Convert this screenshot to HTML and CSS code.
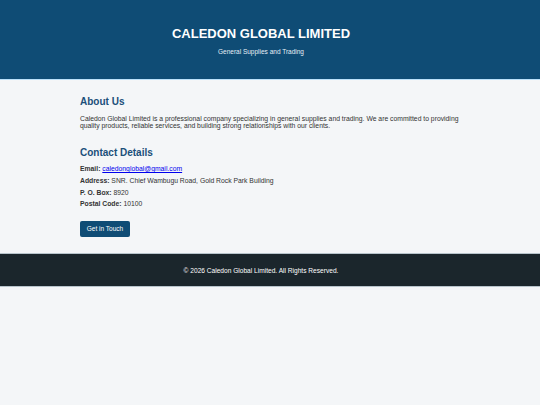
FILE: index.html
```html
<!DOCTYPE html>
<html lang="en">
<head>
<meta charset="utf-8">
<title>Caledon Global Limited</title>
<link rel="stylesheet" href="styles.css">
</head>
<body>
<header class="site-header">
  <h1 class="site-title">CALEDON GLOBAL LIMITED</h1>
  <p class="site-tagline">General Supplies and Trading</p>
</header>
<main class="container">
  <section class="section">
    <h2 class="section-title">About Us</h2>
    <p class="about-text">Caledon Global Limited is a professional company specializing in general supplies and trading. We are committed to providing quality products, reliable services, and building strong relationships with our clients.</p>
  </section>
  <section class="section">
    <h2 class="section-title contact-title">Contact Details</h2>
    <p class="contact-line"><strong>Email:</strong> <a href="mailto:caledonglobal@gmail.com">caledonglobal@gmail.com</a></p>
    <p class="contact-line"><strong>Address:</strong> SNR. Chief Wambugu Road, Gold Rock Park Building</p>
    <p class="contact-line"><strong>P. O. Box:</strong> 8920</p>
    <p class="contact-line"><strong>Postal Code:</strong> 10100</p>
    <a class="btn" href="mailto:caledonglobal@gmail.com">Get in Touch</a>
  </section>
</main>
<footer class="site-footer">
  <p>&copy; 2026 Caledon Global Limited. All Rights Reserved.</p>
</footer>
</body>
</html>
```
FILE: styles.css
```css
html, body {
  margin: 0;
  padding: 0;
}
body {
  background: #f4f6f8;
  font-family: "Liberation Sans", Arial, sans-serif;
  color: #333333;
}
.site-header {
  background: #0f4c75;
  color: #ffffff;
  text-align: center;
  padding: 26px 18px 23px 0;
  border-bottom: 1px solid #bbe1fa;
}
.site-title {
  margin: 0;
  font-size: 13px;
  line-height: 16px;
  font-weight: bold;
}
.site-tagline {
  margin: 6px 0 0;
  font-size: 6.5px;
  line-height: 8px;
  color: #e6eef5;
}
.container {
  width: 380px;
  margin: 0 0 0 80px;
  padding: 16px 0 16px;
}
.section + .section {
  margin-top: 17px;
}
.section-title {
  margin: 0 0 6.5px;
  font-size: 10px;
  line-height: 12px;
  color: #1b4f7a;
}
.contact-title {
  margin-bottom: 4px;
}
.about-text {
  margin: 0;
  font-size: 6.8px;
  line-height: 7.8px;
}
.contact-line {
  margin: 0;
  font-size: 6.8px;
  line-height: 11.7px;
}
.contact-line a {
  color: #0000ee;
}
.btn {
  display: block;
  margin-top: 11.1px;
  background: #0f4c75;
  color: #ffffff;
  text-decoration: none;
  font-size: 6.5px;
  line-height: 16px;
  width: 50px;
  text-align: center;
  border-radius: 2px;
}
.site-footer {
  background: #1b262c;
  color: #ffffff;
  text-align: center;
  box-sizing: border-box;
  height: 34px;
  padding-right: 18px;
  display: flex;
  align-items: center;
  justify-content: center;
  border-top: 1px solid #b8c4cc;
  border-bottom: 1px solid #b8c4cc;
}
.site-footer p {
  margin: 0;
  font-size: 6.6px;
}
```
